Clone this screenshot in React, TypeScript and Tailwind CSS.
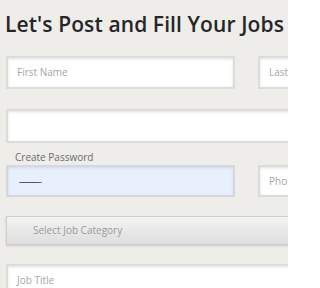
export default function App() {
  return (
    <div className="h-[288px] w-[288px] overflow-hidden bg-[#eeedea] font-['Open_Sans',sans-serif]">
      <div className="w-[330px] pl-[6px]">
        <h1 className="pt-[9px] -ml-[1px] text-[21px] font-semibold leading-[30px] tracking-[0.1px] text-[#262626] whitespace-nowrap">
          Let's Post and Fill Your Jobs
        </h1>

        <div className="mt-[17px] flex gap-[23px]">
          <div className="h-[33px] w-[229px] shrink-0 flex items-center border-2 border-[#dcdcdb] bg-white pl-[9px] text-[10px] text-[#a5a5a5] shadow-[inset_0_1px_3px_rgba(0,0,0,0.12)]">
            First Name
          </div>
          <div className="h-[33px] w-[229px] shrink-0 flex items-center border-2 border-[#dcdcdb] bg-white pl-[9px] text-[10px] text-[#a5a5a5] shadow-[inset_0_1px_3px_rgba(0,0,0,0.12)]">
            Last Name
          </div>
        </div>

        <div className="mt-[20px] h-[34px] w-[320px] border-2 border-[#dcdcdb] bg-white shadow-[inset_0_1px_3px_rgba(0,0,0,0.12)]" />

        <div className="mt-[8px] pl-[9px] text-[10px] leading-[12px] text-[#6b6b6b]">Create Password</div>
        <div className="mt-[2px] flex gap-[23px]">
          <div className="h-[32px] w-[229px] shrink-0 flex items-center border-2 border-[#d4d7dc] bg-[#e8f0fe] pl-[11px] text-[10px] text-[#555] shadow-[inset_0_1px_3px_rgba(0,0,0,0.1)]">
            <span className="tracking-[-1px]">——–</span>
          </div>
          <div className="h-[32px] w-[229px] shrink-0 flex items-center border-2 border-[#dcdcdb] bg-white pl-[9px] text-[10px] text-[#a5a5a5] shadow-[inset_0_1px_3px_rgba(0,0,0,0.12)]">
            Phone
          </div>
        </div>

        <div className="mt-[19px] h-[29px] w-[320px] flex items-center border border-[#cfcfcf] bg-gradient-to-b from-[#f3f3f2] to-[#dedede] pl-[26px] text-[10px] text-[#9a9a9a] shadow-[0_1px_2px_rgba(0,0,0,0.15)]">
          Select Job Category
        </div>

        <div className="mt-[19px] h-[32px] w-[320px] flex items-center border-2 border-[#dcdcdb] bg-white pl-[9px] text-[10px] text-[#a5a5a5] shadow-[inset_0_1px_3px_rgba(0,0,0,0.12)]">
          Job Title
        </div>
      </div>
    </div>
  )
}
